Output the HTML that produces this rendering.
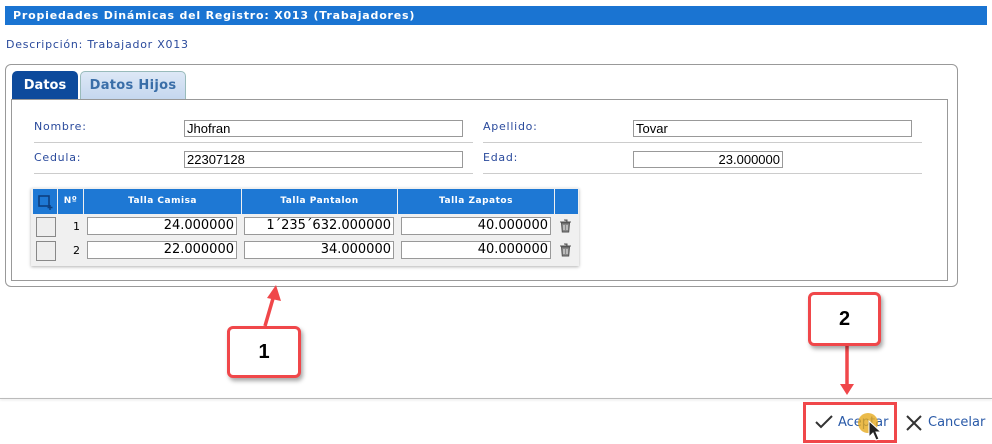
<!DOCTYPE html>
<html><head><meta charset="utf-8"><style>
*{box-sizing:border-box;margin:0;padding:0}
body{width:992px;height:444px;background:#fff;font-family:Verdana,"DejaVu Sans",sans-serif;position:relative;overflow:hidden}
.a{position:absolute}
.title{left:5px;top:6px;width:982px;height:19px;background:#1a74d2;color:#fff;font-weight:bold;font-size:11px;line-height:19px;padding-left:8px;letter-spacing:0.8px}
.lbl{font-size:11px;color:#2a4a9c;letter-spacing:0.75px}
.inp{border:1px solid #999;background:#fff;height:17px;font-size:13px;font-family:"Liberation Sans",sans-serif;line-height:15px;padding:0 2px;color:#000}
.line{height:1px;background:#ccc}
.th{background:#1e78d4;color:#fff;font-size:9px;font-weight:bold;text-align:center;line-height:25px;top:189px;height:25px;letter-spacing:0.5px}
.cell{border:1px solid #999;background:#fff;height:18px;font-size:13px;font-family:"DejaVu Sans",sans-serif;text-align:right;padding-right:2px;line-height:16px}
.cb{border:1px solid #888;background:#eee;width:20px;height:20px}
.call{border:3px solid #f0474a;border-radius:6px;background:#fff;box-shadow:2px 3px 4px rgba(0,0,0,.35);font:bold 20px "Liberation Sans",sans-serif;text-align:center}
</style></head><body>
<div class="a title">Propiedades Dinámicas del Registro: X013 (Trabajadores)</div>
<div class="a lbl" style="left:6px;top:38px">Descripción: Trabajador X013</div>
<div class="a" style="left:5px;top:64px;width:953px;height:223px;border:1px solid #999;border-radius:6px"></div>
<div class="a" style="left:12px;top:71px;width:66px;height:29px;background:#0d4a9c;border-radius:5px 5px 0 0;color:#fff;font-weight:bold;font-size:13px;text-align:center;line-height:29px">Datos</div>
<div class="a" style="left:80px;top:71px;width:106px;height:29px;background:linear-gradient(#dde8f6,#c4d6ee);border:1px solid #9bb;border-bottom:none;border-radius:5px 5px 0 0;color:#3a6ea8;font-weight:bold;font-size:13px;text-align:center;line-height:28px;letter-spacing:0.3px">Datos Hijos</div>
<div class="a" style="left:11px;top:99px;width:937px;height:182px;border:1px solid #999"></div>

<div class="a lbl" style="left:34px;top:120px">Nombre:</div>
<div class="a inp" style="left:184px;top:120px;width:279px">Jhofran</div>
<div class="a line" style="left:34px;top:142px;width:439px"></div>
<div class="a lbl" style="left:34px;top:151px">Cedula:</div>
<div class="a inp" style="left:184px;top:151px;width:279px">22307128</div>
<div class="a line" style="left:34px;top:173px;width:439px"></div>
<div class="a lbl" style="left:483px;top:120px">Apellido:</div>
<div class="a inp" style="left:633px;top:120px;width:279px">Tovar</div>
<div class="a line" style="left:483px;top:142px;width:439px"></div>
<div class="a lbl" style="left:483px;top:151px">Edad:</div>
<div class="a inp" style="left:633px;top:151px;width:150px;text-align:right">23.000000</div>
<div class="a line" style="left:483px;top:173px;width:439px"></div>

<div class="a" style="left:31px;top:188px;width:548px;height:78px;background:#f0f0f0;box-shadow:0 1px 3px rgba(0,0,0,.3)"></div>
<div class="a th" style="left:33px;width:24px"><svg width="16" height="16" viewBox="0 0 16 16" style="margin-top:5px"><rect x="2" y="2" width="10" height="10" fill="none" stroke="#0d3f80" stroke-width="1.6"/><path d="M13 11v5M10.5 13.5h5" stroke="#0d3f80" stroke-width="1.4"/></svg></div>
<div class="a th" style="left:58px;width:25px">Nº</div>
<div class="a th" style="left:84px;width:157px">Talla Camisa</div>
<div class="a th" style="left:242px;width:155px">Talla Pantalon</div>
<div class="a th" style="left:398px;width:156px">Talla Zapatos</div>
<div class="a th" style="left:555px;width:23px"></div>

<div class="a cb" style="left:36px;top:217px"></div>
<div class="a" style="left:60px;top:220px;width:20px;text-align:right;font-size:11px">1</div>
<div class="a cell" style="left:87px;top:217px;width:150px">24.000000</div>
<div class="a cell" style="left:244px;top:217px;width:150px">1´235´632.000000</div>
<div class="a cell" style="left:401px;top:217px;width:150px">40.000000</div>
<div class="a cb" style="left:36px;top:241px"></div>
<div class="a" style="left:60px;top:244px;width:20px;text-align:right;font-size:11px">2</div>
<div class="a cell" style="left:87px;top:241px;width:150px">22.000000</div>
<div class="a cell" style="left:244px;top:241px;width:150px">34.000000</div>
<div class="a cell" style="left:401px;top:241px;width:150px">40.000000</div>
<svg class="a" style="left:559px;top:219px" width="13" height="14" viewBox="0 0 13 14"><path d="M1 3h11M5 1h3v2M2.5 4h8l-.8 9h-6.4z" fill="#888" stroke="#555" stroke-width="1"/><path d="M5 6v5M8 6v5" stroke="#eee"/></svg>
<svg class="a" style="left:559px;top:243px" width="13" height="14" viewBox="0 0 13 14"><path d="M1 3h11M5 1h3v2M2.5 4h8l-.8 9h-6.4z" fill="#888" stroke="#555" stroke-width="1"/><path d="M5 6v5M8 6v5" stroke="#eee"/></svg>

<div class="a" style="left:0;top:398px;width:992px;height:1px;background:#bbb;box-shadow:0 1px 2px rgba(0,0,0,.15)"></div>

<svg class="a" style="left:0;top:0" width="992" height="444">
<path d="M265 326 L274 295" stroke="#f0474a" stroke-width="3.5"/>
<path d="M276 285 L281 301 L267 298 Z" fill="#f0474a"/>
<path d="M847 345 L847 384" stroke="#f0474a" stroke-width="3.5"/>
<path d="M840 384 L854 384 L847 395 Z" fill="#f0474a"/>
</svg>
<div class="a call" style="left:227px;top:326px;width:74px;height:52px;line-height:46px">1</div>
<div class="a call" style="left:808px;top:292px;width:73px;height:54px;line-height:48px">2</div>

<div class="a" style="left:803px;top:402px;width:94px;height:41px;border:3px solid #f0474a"></div>
<svg class="a" style="left:814px;top:414px" width="20" height="16"><path d="M2 8l5 5L18 2" fill="none" stroke="#333" stroke-width="2"/></svg>
<div class="a" style="left:838px;top:415px;font-size:13px;color:#2a5aa8">Aceptar</div>
<div class="a" style="left:858px;top:413px;width:20px;height:20px;border-radius:50%;background:rgba(230,170,30,.8)"></div>
<svg class="a" style="left:868px;top:420px" width="14" height="22"><path d="M1 1v16l4-4 3 7 3-1-3-7h5z" fill="#222" stroke="#fff" stroke-width="1"/></svg>
<svg class="a" style="left:905px;top:414px" width="18" height="18"><path d="M2 2l14 14M16 2L2 16" stroke="#333" stroke-width="2"/></svg>
<div class="a" style="left:928px;top:415px;font-size:13px;color:#2a5aa8">Cancelar</div>
</body></html>
